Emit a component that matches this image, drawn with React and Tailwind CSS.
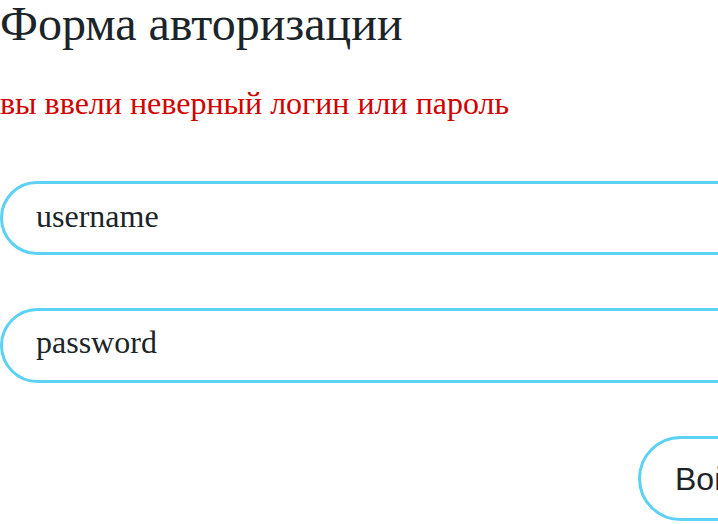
import React from 'react';

const App = () => {
  return (
    <div className="w-[718px] h-[524px] overflow-hidden bg-white">
      <div className="w-[960px]" style={{ fontFamily: '"Liberation Serif", "Times New Roman", serif' }}>
        <h1 className="text-[48px] leading-none text-[#1b2428] font-normal">Форма авторизации</h1>
        <p className="mt-[39px] text-[32px] leading-none text-[#d10000]">вы ввели неверный логин или пароль</p>
        <form className="mt-[62px] flex flex-col" onSubmit={(e) => e.preventDefault()}>
          <input
            type="text"
            placeholder="username"
            className="h-[74px] w-[900px] rounded-full border-[3px] border-[#5bd1f3] pl-[33px] pb-[4px] text-[32px] text-[#1b2428] placeholder:text-[#1b2428] outline-none"
            style={{ fontFamily: '"Liberation Serif", serif' }}
          />
          <input
            type="password"
            placeholder="password"
            className="mt-[53px] h-[75px] w-[900px] rounded-full border-[3px] border-[#5bd1f3] pl-[33px] pb-[6px] text-[32px] text-[#1b2428] placeholder:text-[#1b2428] outline-none"
            style={{ fontFamily: '"Liberation Serif", serif' }}
          />
          <div className="mt-[53px] pl-[638px]">
            <button
              type="submit"
              className="h-[85px] rounded-full border-[3px] border-[#5bd1f3] bg-white px-[34px] text-[32px] text-[#1b2428]"
              style={{ fontFamily: '"Liberation Sans", Arial, sans-serif' }}
            >
              Войти
            </button>
          </div>
        </form>
      </div>
    </div>
  );
};

export default App;
